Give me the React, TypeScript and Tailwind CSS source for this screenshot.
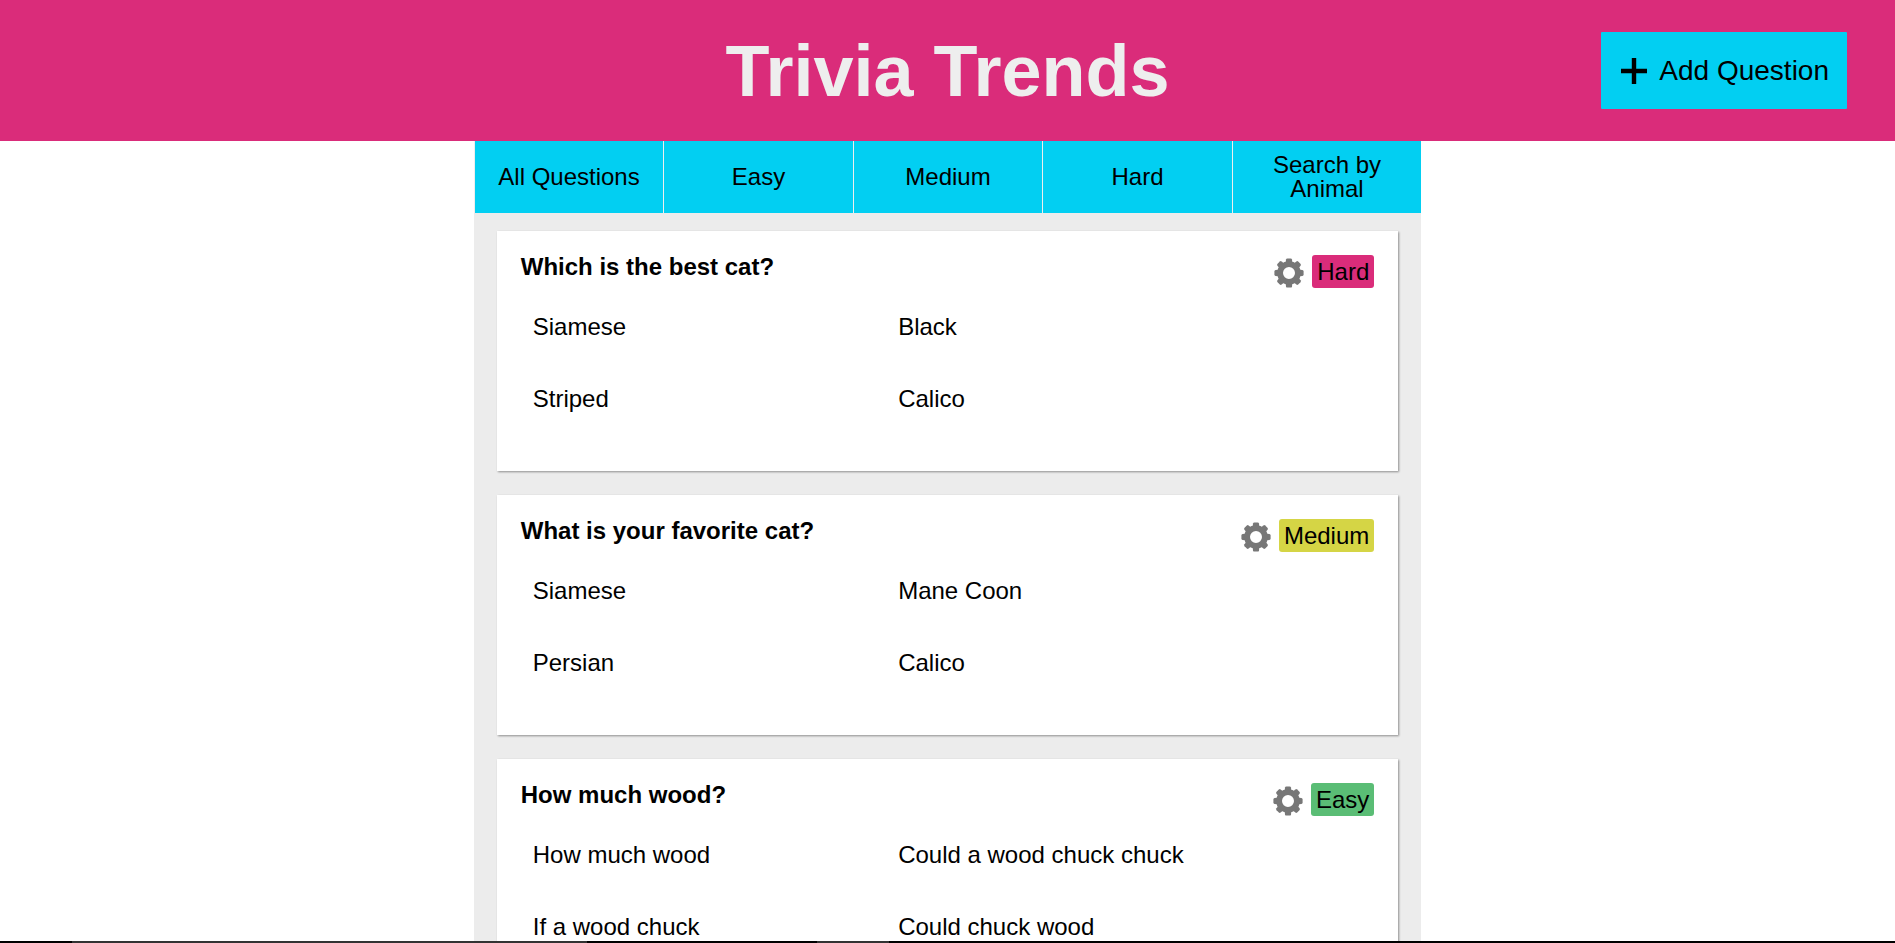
import React from "react";

type Level = "Easy" | "Medium" | "Hard";

interface Question {
  title: string;
  level: Level;
  answers: string[];
}

const levelColors: Record<Level, string> = {
  Easy: "bg-[#5abd75]",
  Medium: "bg-[#d5d545]",
  Hard: "bg-[#da2c7a]",
};

const filters = ["All Questions", "Easy", "Medium", "Hard", "Search by Animal"];

const questions: Question[] = [
  {
    title: "Which is the best cat?",
    level: "Hard",
    answers: ["Siamese", "Black", "Striped", "Calico"],
  },
  {
    title: "What is your favorite cat?",
    level: "Medium",
    answers: ["Siamese", "Mane Coon", "Persian", "Calico"],
  },
  {
    title: "How much wood?",
    level: "Easy",
    answers: [
      "How much wood",
      "Could a wood chuck chuck",
      "If a wood chuck",
      "Could chuck wood",
    ],
  },
];

function PlusIcon() {
  return (
    <svg viewBox="0 0 26 26" className="size-[26px]" aria-hidden="true">
      <path d="M10.8 0h4.4v10.8H26v4.4H15.2V26h-4.4V15.2H0v-4.4h10.8z" fill="#000" />
    </svg>
  );
}

const teeth = [0, 45, 90, 135, 180, 225, 270, 315];

function GearIcon() {
  return (
    <svg viewBox="0 0 30 30" className="size-[30px]" aria-hidden="true">
      <g fill="#777">
        {teeth.map((angle) => (
          <path
            key={angle}
            d="M11.6 6 12 1.6Q12.2.4 13.4.4h3.2Q17.8.4 18 1.6L18.4 6z"
            transform={`rotate(${angle} 15 15)`}
          />
        ))}
      </g>
      <circle cx="15" cy="15" r="8.9" fill="none" stroke="#777" strokeWidth="5.8" />
    </svg>
  );
}

function QuestionCard({ title, level, answers }: Question) {
  return (
    <article className="bg-white p-6 shadow-[1px_1px_2px_rgba(0,0,0,0.4)]">
      <div className="flex h-12 items-start justify-between">
        <h2 className="font-bold">{title}</h2>
        <div className="flex items-center gap-2">
          <button type="button" aria-label="Question settings" className="pt-0.5">
            <GearIcon />
          </button>
          <span className={`rounded-[3px] px-[5px] py-1 leading-[25px] ${levelColors[level]}`}>
            {level}
          </span>
        </div>
      </div>
      <ul className="flex flex-wrap">
        {answers.map((answer) => (
          <li key={answer} className="m-3 h-12 w-2/5">
            {answer}
          </li>
        ))}
      </ul>
    </article>
  );
}

export default function App() {
  return (
    <div className="flex h-screen flex-col overflow-hidden bg-white font-['Liberation_Sans',Arial,sans-serif] text-2xl leading-6 text-black">
      <div className="min-h-0 flex-1 overflow-hidden">
        <header className="grid h-[141px] grid-cols-[1fr_auto_1fr] items-center bg-[#da2c7a] px-12">
          <h1 className="col-start-2 text-7xl font-bold text-[#eee]">Trivia Trends</h1>
          <button
            type="button"
            className="flex h-[77px] items-center gap-3 justify-self-end rounded-[1px] bg-[#02cff2] pr-[18px] pl-5 text-[28px]"
          >
            <PlusIcon />
            Add Question
          </button>
        </header>
        <main className="mx-auto w-1/2 bg-[#ececec]">
          <nav className="flex h-[72px]">
            {filters.map((filter) => (
              <button
                key={filter}
                type="button"
                className="flex-1 border-l border-[#eee] bg-[#02cff2] px-4"
              >
                {filter}
              </button>
            ))}
          </nav>
          <div className="flex flex-col gap-6 px-[23px] pt-[18px] pb-6">
            {questions.map((question) => (
              <QuestionCard key={question.title} {...question} />
            ))}
          </div>
        </main>
      </div>
      <div className="flex h-0.5 shrink-0 bg-black" aria-hidden="true">
        <div className="ml-[3.8%] w-[27.2%] bg-[#333]" />
        <div className="ml-[12.1%] w-[3.8%] bg-[#333]" />
      </div>
    </div>
  );
}
